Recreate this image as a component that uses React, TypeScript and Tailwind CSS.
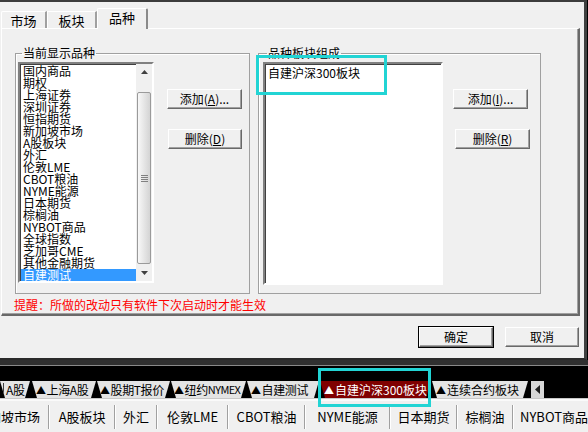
const listItems = [
  "国内商品",
  "期权",
  "上海证券",
  "深圳证券",
  "恒指期货",
  "新加坡市场",
  "A股板块",
  "外汇",
  "伦敦LME",
  "CBOT粮油",
  "NYME能源",
  "日本期货",
  "棕榈油",
  "NYBOT商品",
  "全球指数",
  "芝加哥CME",
  "其他金融期货",
  "自建测试",
];

const bottomItems = [
  { label: "A股板块", w: "w-[64px]" },
  { label: "外汇", w: "w-[40px]" },
  { label: "伦敦LME", w: "w-[69px]" },
  { label: "CBOT粮油", w: "w-[75px]" },
  { label: "NYME能源", w: "w-[83px]" },
  { label: "日本期货", w: "w-[65px]" },
  { label: "棕榈油", w: "w-[54px]" },
];

function WinButton({
  children,
  className = "",
}: {
  children: React.ReactNode;
  className?: string;
}) {
  return (
    <div
      className={`h-[20px] flex items-center justify-center text-[12px] leading-none bg-[#f0f0f0] border border-t-white border-l-white border-r-[#696969] border-b-[#696969] shadow-[inset_-1px_-1px_0_#a0a0a0] ${className}`}
    >
      {children}
    </div>
  );
}

function Tab({
  children,
  className = "",
}: {
  children: React.ReactNode;
  className?: string;
}) {
  return (
    <div
      className={`h-[17px] flex items-center whitespace-nowrap overflow-hidden text-[12px] leading-none tracking-[-0.4px] [clip-path:polygon(0_0,100%_0,calc(100%_-_5px)_100%,5px_100%)] ${className}`}
    >
      {children}
    </div>
  );
}

function Tri() {
  return <span className="text-[10px] mr-[1px]">▲</span>;
}

export default function App() {
  return (
    <div className="relative w-[588px] h-[432px] overflow-hidden bg-black text-black font-['Noto_Sans_CJK_SC',sans-serif]">
      {/* dialog */}
      <div className="w-[587px] h-[360px] bg-[#f0f0f0] border-t-2 border-t-[#3c3c3c] border-r-[3px] border-r-[#404040] border-b-2 border-b-[#2a2a2a] flex flex-col">
        {/* tab strip */}
        <div className="h-[26px] flex items-end pl-[1px]">
          <div className="w-[46px] h-[17px] flex items-center justify-center text-[13px] leading-none border-t border-l border-white border-r-2 border-r-[#a0a0a0] rounded-tl-[2px]">
            市场
          </div>
          <div className="w-[50px] h-[17px] flex items-center justify-center text-[13px] leading-none border-t border-l border-white border-r-2 border-r-[#a0a0a0]">
            板块
          </div>
          <div className="relative z-10 -mb-px w-[51px] h-[21px] pb-[3px] flex items-center justify-center text-[13px] leading-none bg-[#f0f0f0] border-t border-l border-white border-r-2 border-r-[#8a8a8a] rounded-t-[2px]">
            品种
          </div>
        </div>

        {/* tab panel */}
        <div className="ml-[1px] w-[579px] h-[288px] border-t border-l border-white border-r-2 border-b-2 border-r-[#696969] border-b-[#696969] shadow-[inset_-1px_-1px_0_#a0a0a0] pl-[13px] pt-[17px]">
          <div className="flex gap-[8px]">
            {/* left group */}
            <fieldset className="w-[235px] h-[248px] border border-[#a0a0a0] shadow-[inset_1px_1px_0_white]">
              <legend className="ml-[6px] px-[1px] text-[12px] leading-[14px]">
                当前显示品种
              </legend>
              <div className="flex pl-[2px] pt-[2px]">
                <div className="w-[136px] h-[221px] bg-white border-2 border-t-[#808080] border-l-[#808080] border-r-white border-b-white shadow-[inset_1px_1px_0_#404040] flex">
                  <div className="w-[116px] pt-[1px] pl-px">
                    {listItems.map((item, i) => (
                      <div
                        key={item}
                        className={`h-[12px] pl-[2px] text-[12px] leading-[12px] whitespace-nowrap ${
                          i === listItems.length - 1
                            ? "bg-[#3399ff] text-white"
                            : ""
                        }`}
                      >
                        {item}
                      </div>
                    ))}
                  </div>
                  {/* scrollbar */}
                  <div className="w-[16px] bg-[#f0f0f0] flex flex-col">
                    <div className="h-[16px] flex items-center justify-center">
                      <svg width="7" height="4" viewBox="0 0 7 4">
                        <path d="M0 4 L3.5 0 L7 4 Z" fill="#404040" />
                      </svg>
                    </div>
                    <div className="flex-1 pt-[12px] px-[1px]">
                      <div className="h-[172px] rounded-[2px] border border-[#9a9a9a] bg-gradient-to-r from-[#f8f8f8] to-[#d4d4d4] flex flex-col items-center justify-center gap-[1px]">
                        <div className="w-[7px] h-px bg-[#808080]" />
                        <div className="w-[7px] h-px bg-[#808080]" />
                        <div className="w-[7px] h-px bg-[#808080]" />
                        <div className="w-[7px] h-px bg-[#808080]" />
                      </div>
                    </div>
                    <div className="h-[16px] flex items-center justify-center">
                      <svg width="7" height="4" viewBox="0 0 7 4">
                        <path d="M0 0 L7 0 L3.5 4 Z" fill="#404040" />
                      </svg>
                    </div>
                  </div>
                </div>
                <div className="ml-[13px] pt-[27px] flex flex-col gap-[20px]">
                  <WinButton className="w-[75px]">
                    添加(<span className="underline">A</span>)...
                  </WinButton>
                  <WinButton className="ml-px w-[74px]">
                    删除(<span className="underline">D</span>)
                  </WinButton>
                </div>
              </div>
            </fieldset>

            {/* right group */}
            <fieldset className="w-[283px] h-[248px] border border-[#a0a0a0] shadow-[inset_1px_1px_0_white]">
              <legend className="ml-[8px] px-[1px] text-[12px] leading-[14px]">
                品种板块组成
              </legend>
              <div className="flex pl-[4px] pt-[2px]">
                <div className="w-[180px] h-[223px] bg-white border-2 border-t-[#808080] border-l-[#808080] border-r-white border-b-white shadow-[inset_1px_1px_0_#404040] pl-[3px] pt-[2px] text-[12px] leading-[14px]">
                  自建沪深300板块
                </div>
                <div className="ml-[10px] pt-[27px] flex flex-col gap-[20px]">
                  <WinButton className="w-[75px]">
                    添加(<span className="underline">I</span>)...
                  </WinButton>
                  <WinButton className="ml-[2px] w-[75px]">
                    删除(<span className="underline">R</span>)
                  </WinButton>
                </div>
              </div>
            </fieldset>
          </div>
          <div className="mt-[4px] -ml-px text-[12px] leading-[14px] text-[#ff0000]">
            提醒：所做的改动只有软件下次启动时才能生效
          </div>
        </div>

        {/* footer buttons */}
        <div className="mt-[11px] flex justify-end gap-[12px] pr-[5px]">
          <WinButton className="w-[74px] outline outline-1 outline-black">
            确定
          </WinButton>
          <WinButton className="w-[74px]">取消</WinButton>
        </div>
      </div>

      {/* dark strip */}
      <div className="h-[5px] bg-[#303030]" />
      <div className="h-px bg-[#8a8a8a]" />
      <div className="h-[15px] bg-black" />

      {/* sheet tab bar */}
      <div className="h-[17px] flex bg-black">
        <Tab className="w-[30px] bg-[#e4e4e4] pl-[3px] [clip-path:none]">
          <span className="w-px h-[13px] bg-[#404040] mr-[2px]" />
          A股
        </Tab>
        <Tab className="ml-[2px] w-[64px] bg-[#e4e4e4] pl-[4px]">
          <Tri />
          上海A股
        </Tab>
        <Tab className="ml-px w-[73px] bg-[#e4e4e4] pl-[3px]">
          <Tri />
          股期T报价
        </Tab>
        <Tab className="ml-px w-[75px] bg-[#e4e4e4] pl-[3px]">
          <Tri />
          纽约<span className="text-[11px] tracking-[-0.6px]">NYMEX</span>
        </Tab>
        <Tab className="ml-px w-[72px] bg-[#e4e4e4] pl-[4px]">
          <Tri />
          自建测试
        </Tab>
        <Tab className="ml-px w-[111px] bg-[#800000] text-white pl-[4px] tracking-normal">
          <Tri />
          自建沪深300板块
        </Tab>
        <Tab className="ml-px w-[96px] bg-[#e4e4e4] pl-[4px] tracking-normal">
          <Tri />
          连续合约板块
        </Tab>
        <div className="ml-[3px] w-[13px] h-[17px] bg-[#d8d8d8] flex items-center justify-center">
          <svg width="5" height="9" viewBox="0 0 5 9">
            <path d="M5 0 L0 4.5 L5 9 Z" fill="#202020" />
          </svg>
        </div>
      </div>

      {/* bottom quick row */}
      <div className="h-[3px] bg-[#fafafa] border-t border-t-[#c8c8c8]" />
      <div className="h-[31px] bg-[#f0f0f0] flex items-center text-[13px] leading-none whitespace-nowrap">
        <div className="w-[49px] overflow-hidden flex justify-end pr-[8px]">
          新加坡市场
        </div>
        {bottomItems.map((it) => (
          <div key={it.label} className="flex items-center">
            <div className="w-px h-[24px] bg-[#a0a0a0] border-r border-white box-content" />
            <div className={`${it.w} flex justify-center`}>{it.label}</div>
          </div>
        ))}
        <div className="w-px h-[24px] bg-[#a0a0a0] border-r border-white box-content" />
        <div className="pl-[6px]">NYBOT商品</div>
      </div>

      {/* highlight annotations */}
      <div className="absolute left-[256px] top-[55px] w-[131px] h-[40px] border-[3px] border-[#22d4d4]" />
      <div className="absolute left-[318px] top-[368px] w-[113px] h-[39px] border-[3px] border-[#22d4d4]" />
    </div>
  );
}
